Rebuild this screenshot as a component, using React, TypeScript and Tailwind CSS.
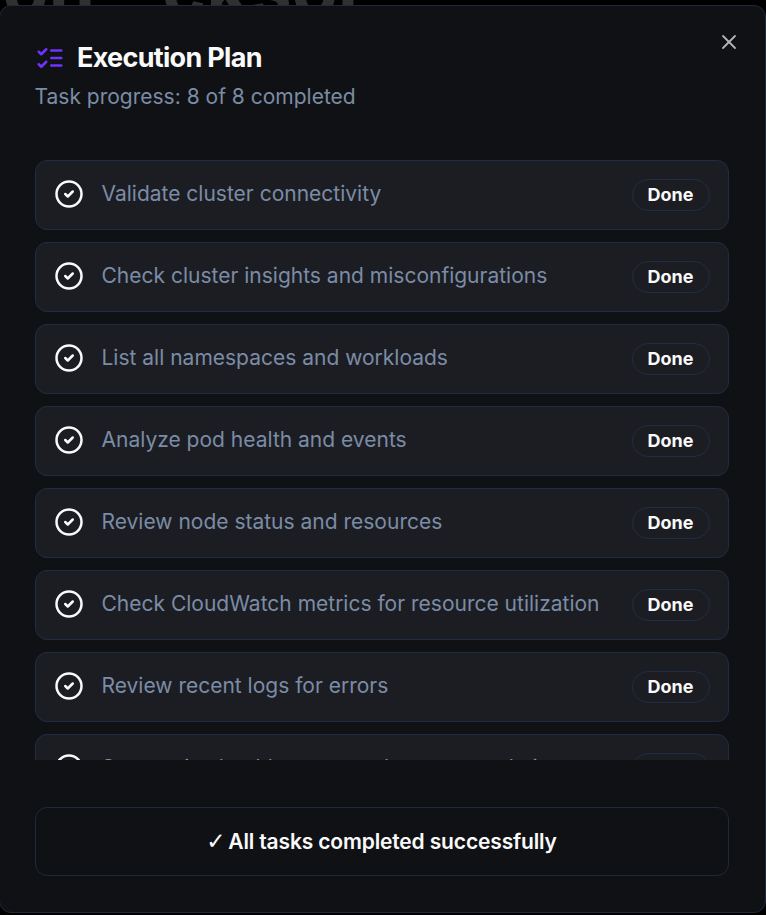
import { X, CircleCheck } from "lucide-react";
import { JSX } from "react";

type Task = {
    id: number;
    title: string;
    status: string;
};

const tasks: Task[] = [
    { id: 1, title: "Validate cluster connectivity", status: "Done" },
    { id: 2, title: "Check cluster insights and misconfigurations", status: "Done" },
    { id: 3, title: "List all namespaces and workloads", status: "Done" },
    { id: 4, title: "Analyze pod health and events", status: "Done" },
    { id: 5, title: "Review node status and resources", status: "Done" },
    { id: 6, title: "Check CloudWatch metrics for resource utilization", status: "Done" },
    { id: 7, title: "Review recent logs for errors", status: "Done" },
    { id: 8, title: "Summarize health status and recommendations", status: "Done" },
];

function ListChecksIcon(): JSX.Element {
    return (
        <svg
            className="size-[30px] shrink-0 text-[#7033ff]"
            viewBox="0 0 24 24"
            fill="none"
            stroke="currentColor"
            strokeWidth="2"
            strokeLinecap="round"
            strokeLinejoin="round"
        >
            <path d="m3 17 2 2 4-4" />
            <path d="m3 7 2 2 4-4" />
            <path d="M13 6h8" />
            <path d="M13 12h8" />
            <path d="M13 18h8" />
        </svg>
    );
}

function TaskItem({ task }: { task: Task }): JSX.Element {
    return (
        <li className="flex h-[70px] shrink-0 items-center rounded-xl border border-[#1f2d44] bg-[#1c1d22] px-[18px] pb-0.5">
            <CircleCheck className="size-[30px] shrink-0 text-[#fafafa]" />
            <span className="ml-[17.5px] flex-1 text-[21px] leading-[30px] text-[#7b8ca6]">
                {task.title}
            </span>
            <span className="mt-0.5 flex h-8 w-[78px] items-center justify-center rounded-full border border-[#1f2d44] pr-px text-lg font-bold text-[#fafafa]">
                {task.status}
            </span>
        </li>
    );
}

export default function App(): JSX.Element {
    return (
        <div className="relative h-[915px] w-[766px] overflow-hidden bg-black pt-[5px] font-[Inter,sans-serif]">
            {/* page heading dimmed behind the dialog */}
            <div className="absolute -top-[49px] -left-[41px] flex text-[75px] leading-[75px] font-bold text-[#303030]">
                <span className="w-[203px]">von</span>
                <span>cksol</span>
            </div>

            <div className="relative -ml-px flex h-[908px] w-[767px] flex-col rounded-xl border border-[#1e293b] bg-[#101114] pr-9 pl-[35px]">
                <button
                    className="absolute top-[24px] right-[24px] text-[#b4b4b6]"
                    aria-label="Close"
                >
                    <X className="size-6" strokeWidth={1.8} />
                </button>

                <header className="pt-[37px]">
                    <div className="flex items-center gap-3">
                        <ListChecksIcon />
                        <h2 className="text-[27px] leading-[30px] font-bold tracking-[-0.7px] text-[#fafafa]">
                            Execution Plan
                        </h2>
                    </div>
                    <p className="mt-[9px] -ml-[0.5px] text-[21px] leading-[30px] text-[#7b8ca6]">
                        Task progress: 8 of 8 completed
                    </p>
                </header>

                <ul className="mt-12 flex h-[600px] flex-col gap-3 overflow-hidden">
                    {tasks.map((task) => (
                        <TaskItem key={task.id} task={task} />
                    ))}
                </ul>

                <div className="mt-[47px] flex h-[69px] items-center justify-center gap-[3px] rounded-xl border border-[#1e293b] text-[21px] font-semibold tracking-[-0.15px] text-[#fafafa]">
                    <span className="-ml-px font-['DejaVu_Sans',sans-serif] text-[23px] leading-none font-normal">
                        ✓
                    </span>
                    <span>All tasks completed successfully</span>
                </div>
            </div>
        </div>
    );
}
